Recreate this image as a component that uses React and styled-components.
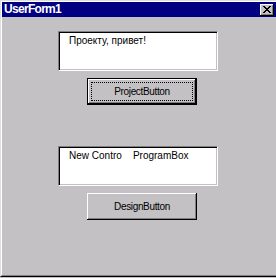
import React from "react";
import styled, { createGlobalStyle } from "styled-components";

const GlobalStyle = createGlobalStyle`
  html, body {
    margin: 0;
    padding: 0;
    overflow: hidden;
    background: #c3c1c3;
  }
  * {
    box-sizing: border-box;
  }
`;

const Window = styled.div`
  width: 278px;
  height: 277px;
  border: 1px solid;
  border-color: #dfdfdf #000 #000 #dfdfdf;
  background: #c3c1c3;
  font-family: "Liberation Sans", Arial, sans-serif;
`;

const Frame = styled.div`
  height: 100%;
  border: 1px solid;
  border-color: #fff #808080 #808080 #fff;
  display: flex;
  flex-direction: column;
`;

const TitleBar = styled.div`
  height: 15px;
  background: #000080;
  display: flex;
  align-items: center;
  justify-content: space-between;
  padding: 0 2px 0 2px;
`;

const Title = styled.span`
  color: #fff;
  font-size: 12px;
  font-weight: 700;
  letter-spacing: -0.7px;
  line-height: 15px;
`;

const CloseButton = styled.div`
  width: 14px;
  height: 12px;
  background: #c3c1c3;
  display: flex;
  align-items: center;
  justify-content: center;
  box-shadow: inset -1px -1px #000, inset 1px 1px #fff, inset -2px -2px #808080;
`;

const Client = styled.div`
  flex: 1;
  display: flex;
  flex-direction: column;
  align-items: flex-start;
  padding: 14px 0 0 56px;
`;

const TextBox = styled.div`
  width: 160px;
  height: 40px;
  margin-top: ${(p) => p.$top || 0}px;
  background: #fff;
  border: 1px solid;
  border-color: #808080 #fff #fff #808080;
  box-shadow: inset 1px 1px #000, inset -1px -1px #c3c1c3;
  padding: 2px 8px 0 10px;
  font-size: 10px;
  line-height: 13px;
  color: #000;
  white-space: pre;
`;

const Button = styled.div`
  width: 110px;
  height: 27px;
  margin: 7px 0 0 29px;
  background: #c3c1c3;
  display: flex;
  align-items: center;
  justify-content: center;
  font-size: 10px;
  letter-spacing: -0.35px;
  color: #000;
  border: ${(p) => (p.$default ? "1px solid #000" : "none")};
  box-shadow: inset -1px -1px #000, inset 1px 1px #fff, inset -2px -2px #808080;
  outline: ${(p) => (p.$default ? "1px dotted #000" : "none")};
  outline-offset: -5px;
`;

function CloseIcon() {
  return (
    <svg width="8" height="7" viewBox="0 0 8 7" shapeRendering="crispEdges">
      <path
        d="M0 0h2v1h-2zM6 0h2v1h-2zM1 1h2v1h-2zM5 1h2v1h-2zM2 2h4v1h-4zM3 3h2v1h-2zM2 4h4v1h-4zM1 5h2v1h-2zM5 5h2v1h-2zM0 6h2v1h-2zM6 6h2v1h-2z"
        fill="#000"
      />
    </svg>
  );
}

export default function App() {
  return (
    <>
      <GlobalStyle />
      <Window>
        <Frame>
          <TitleBar>
            <Title>UserForm1</Title>
            <CloseButton>
              <CloseIcon />
            </CloseButton>
          </TitleBar>
          <Client>
            <TextBox>Проекту, привет!</TextBox>
            <Button $default>ProjectButton</Button>
            <TextBox $top={41}>{"New Contro    ProgramBox"}</TextBox>
            <Button>DesignButton</Button>
          </Client>
        </Frame>
      </Window>
    </>
  );
}
